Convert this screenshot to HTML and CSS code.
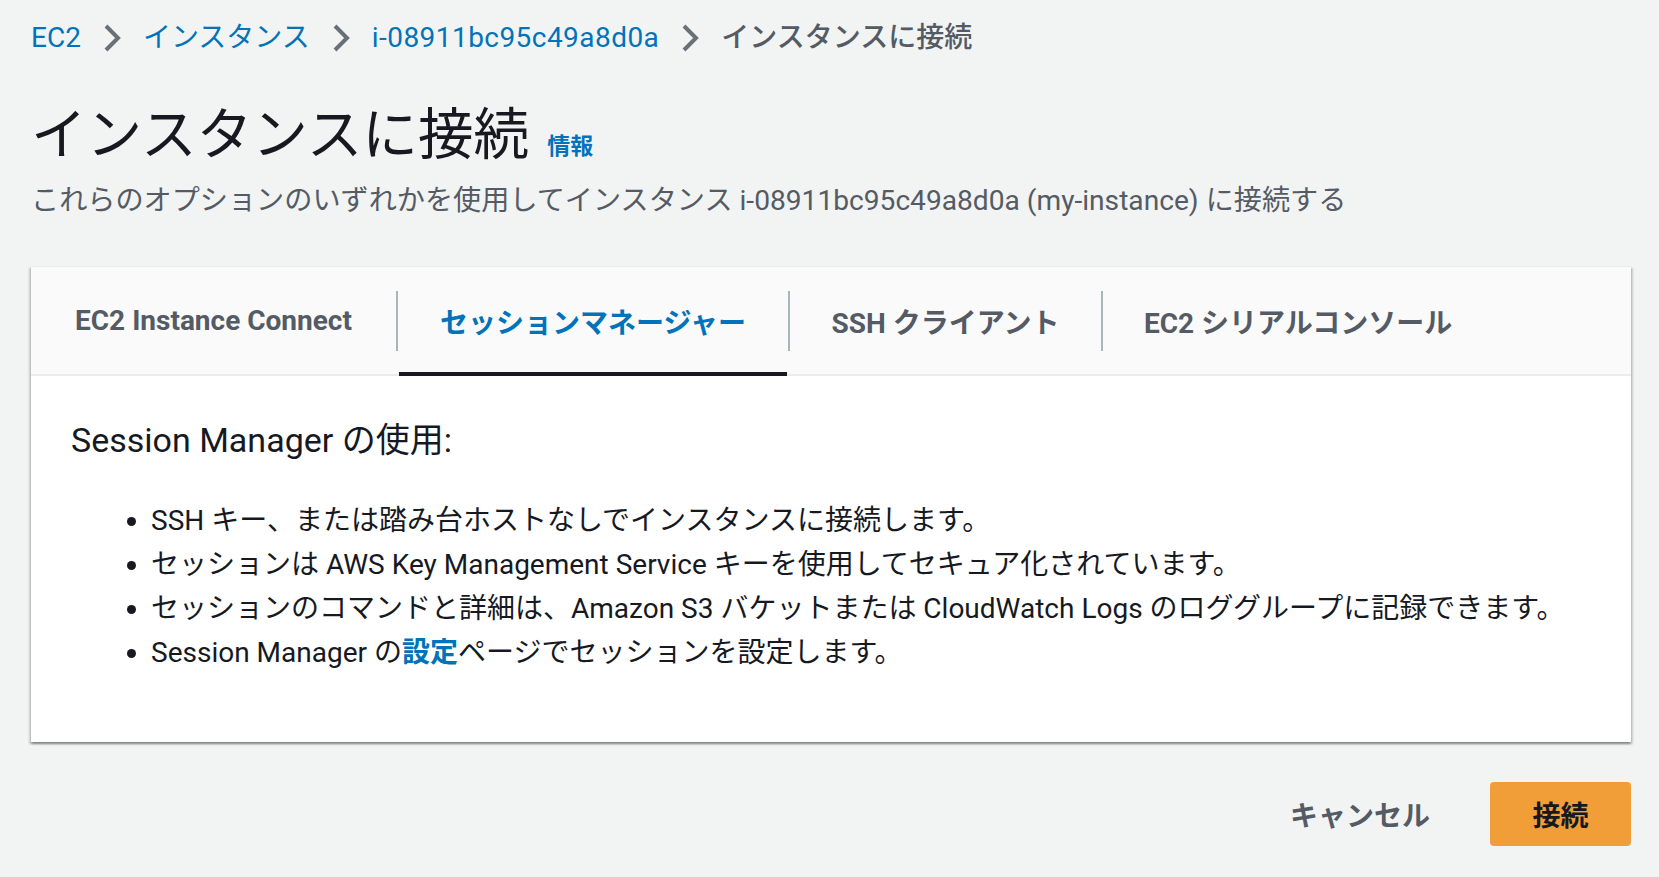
FILE: index.html
```html
<!DOCTYPE html>
<html lang="ja">
<head>
<meta charset="utf-8">
<title>インスタンスに接続</title>
<link rel="stylesheet" href="styles.css">
</head>
<body>
<div class="page">
  <nav class="breadcrumb">
    <a class="crumb-link" href="#">EC2</a>
    <svg class="chev" viewBox="0 0 18 30" width="18" height="30"><path d="M3 3 L15 15 L3 27" fill="none" stroke="#687078" stroke-width="4"/></svg>
    <a class="crumb-link" href="#">インスタンス</a>
    <svg class="chev" viewBox="0 0 18 30" width="18" height="30"><path d="M3 3 L15 15 L3 27" fill="none" stroke="#687078" stroke-width="4"/></svg>
    <a class="crumb-link crumb-id" href="#">i-08911bc95c49a8d0a</a>
    <svg class="chev" viewBox="0 0 18 30" width="18" height="30"><path d="M3 3 L15 15 L3 27" fill="none" stroke="#687078" stroke-width="4"/></svg>
    <span class="crumb-current">インスタンスに接続</span>
  </nav>

  <div class="title-row">
    <h1 class="title">インスタンスに接続</h1>
    <a class="info" href="#">情報</a>
  </div>
  <p class="desc">これらのオプションのいずれかを使用してインスタンス i-08911bc95c49a8d0a (my-instance) に接続する</p>

  <section class="card">
    <div class="tabbar">
      <div class="tab tab-1">EC2 Instance Connect</div>
      <span class="sep"></span>
      <div class="tab tab-2 active">セッションマネージャー</div>
      <span class="sep"></span>
      <div class="tab tab-3">SSH クライアント</div>
      <span class="sep"></span>
      <div class="tab tab-4">EC2 シリアルコンソール</div>
    </div>
    <div class="card-body">
      <h2 class="heading">Session Manager の使用:</h2>
      <ul class="list">
        <li>SSH キー、または踏み台ホストなしでインスタンスに接続します。</li>
        <li>セッションは AWS Key Management Service キーを使用してセキュア化されています。</li>
        <li>セッションのコマンドと詳細は、Amazon S3 バケットまたは CloudWatch Logs のロググループに記録できます。</li>
        <li>Session Manager の<a class="link" href="#">設定</a>ページでセッションを設定します。</li>
      </ul>
    </div>
  </section>

  <div class="actions">
    <button class="btn btn-cancel">キャンセル</button>
    <button class="btn btn-primary">接続</button>
  </div>
</div>
</body>
</html>
```

FILE: styles.css
```css
html, body {
  margin: 0;
  padding: 0;
  background: #f2f3f3;
}
body {
  font-family: Roboto, "Noto Sans CJK JP", sans-serif;
  color: #16191f;
}
.page {
  padding: 18px 28px 0 31px;
}
.breadcrumb {
  display: flex;
  align-items: center;
  height: 40px;
  font-size: 28px;
  line-height: 40px;
}
.crumb-link {
  color: #0073bb;
  text-decoration: none;
}
.crumb-id {
  letter-spacing: 0.45px;
}
.chev {
  margin: 0 22px 0 22px;
  flex: none;
}
.crumb-current {
  color: #545b64;
  font-weight: 500;
}
.title-row {
  display: flex;
  align-items: baseline;
  margin-top: 45px;
  height: 64px;
}
.title {
  margin: 0;
  font-size: 55.6px;
  line-height: 64px;
  font-weight: 400;
  color: #16191f;
}
.info {
  margin-left: 18px;
  font-size: 23px;
  font-weight: 700;
  color: #0073bb;
  text-decoration: none;
}
.desc {
  margin: 14px 0 0 0;
  font-size: 28.15px;
  line-height: 40px;
  color: #545b64;
}
.card {
  margin-top: 45px;
  background: #ffffff;
  box-shadow: 0 2px 2px 0 rgba(0, 28, 36, 0.3), 2px 2px 2px 0 rgba(0, 28, 36, 0.15), -2px 2px 2px 0 rgba(0, 28, 36, 0.15);
  border-top: 1px solid #eaeded;
}
.tabbar {
  display: flex;
  align-items: center;
  height: 107px;
  background: #fafafa;
  border-bottom: 2px solid #eaeded;
}
.tab {
  position: relative;
  display: flex;
  align-items: center;
  justify-content: center;
  height: 100%;
  box-sizing: border-box;
  font-size: 28px;
  font-weight: 700;
  color: #545b64;
  white-space: nowrap;
}
.tab-1 { width: 365px; }
.tab-2 { width: 390px; }
.tab-3 { width: 311px; }
.tab-4 { padding: 0 41px; }
.tab.active {
  color: #0073bb;
}
.tab.active::after {
  content: "";
  position: absolute;
  left: 1px;
  right: 1px;
  bottom: -2px;
  height: 4px;
  background: #16191f;
}
.sep {
  flex: none;
  width: 2px;
  height: 60px;
  background: #aab7b8;
}
.card-body {
  padding: 42px 40px 67px 40px;
}
.heading {
  margin: 0;
  font-size: 34px;
  line-height: 44px;
  font-weight: 400;
  color: #16191f;
}
.list {
  margin: 37px 0 0 0;
  padding-left: 80px;
  font-size: 28px;
  line-height: 44px;
  color: #16191f;
}
.link {
  color: #0073bb;
  font-weight: 700;
  text-decoration: none;
}
.actions {
  display: flex;
  justify-content: flex-end;
  align-items: center;
  gap: 20px;
  margin-top: 40px;
}
.btn {
  font-family: Roboto, "Noto Sans CJK JP", sans-serif;
  font-size: 28px;
  font-weight: 700;
  height: 64px;
  border: none;
  border-radius: 4px;
  cursor: pointer;
}
.btn-cancel {
  background: transparent;
  color: #545b64;
  padding: 0 40px;
}
.btn-primary {
  background: #f19e39;
  color: #16191f;
  width: 141px;
  padding: 0;
}
```
